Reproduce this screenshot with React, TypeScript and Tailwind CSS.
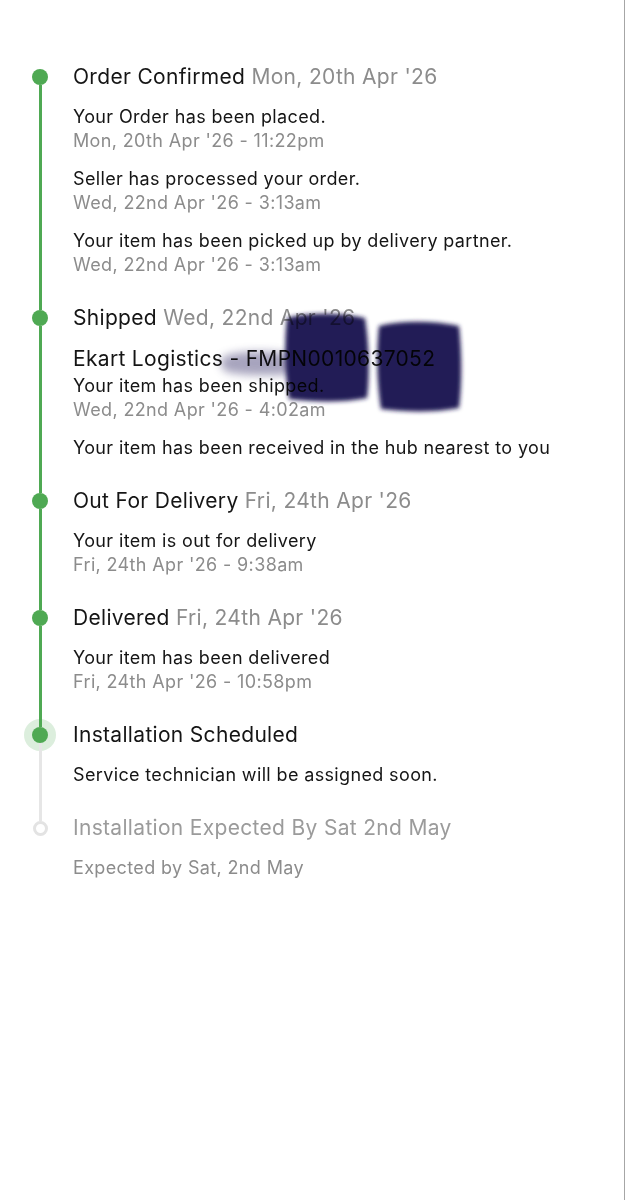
import React from 'react';

type Event = { text: string; time?: string; big?: boolean; muted?: boolean };
type Step = {
  title: string;
  date?: string;
  state: 'done' | 'current' | 'pending';
  events: Event[];
  redacted?: boolean;
};

const steps: Step[] = [
  {
    title: 'Order Confirmed',
    date: "Mon, 20th Apr '26",
    state: 'done',
    events: [
      { text: 'Your Order has been placed.', time: "Mon, 20th Apr '26 - 11:22pm" },
      { text: 'Seller has processed your order.', time: "Wed, 22nd Apr '26 - 3:13am" },
      { text: 'Your item has been picked up by delivery partner.', time: "Wed, 22nd Apr '26 - 3:13am" },
    ],
  },
  {
    title: 'Shipped',
    date: "Wed, 22nd Apr '26",
    state: 'done',
    redacted: true,
    events: [
      { text: 'Ekart Logistics - FMPN0010637052', big: true },
      { text: 'Your item has been shipped.', time: "Wed, 22nd Apr '26 - 4:02am" },
      { text: 'Your item has been received in the hub nearest to you' },
    ],
  },
  {
    title: 'Out For Delivery',
    date: "Fri, 24th Apr '26",
    state: 'done',
    events: [{ text: 'Your item is out for delivery', time: "Fri, 24th Apr '26 - 9:38am" }],
  },
  {
    title: 'Delivered',
    date: "Fri, 24th Apr '26",
    state: 'done',
    events: [{ text: 'Your item has been delivered', time: "Fri, 24th Apr '26 - 10:58pm" }],
  },
  {
    title: 'Installation Scheduled',
    state: 'current',
    events: [{ text: 'Service technician will be assigned soon.' }],
  },
  {
    title: 'Installation Expected By Sat 2nd May',
    state: 'pending',
    events: [{ text: 'Expected by Sat, 2nd May', muted: true }],
  },
];

function Redaction() {
  // scribble covering part of the tracking row
  return (
    <svg
      className="absolute left-0 top-0 pointer-events-none mix-blend-multiply"
      width="400"
      height="120"
      viewBox="0 0 400 120"
    >
      <defs>
        <filter id="soft" x="-20%" y="-20%" width="140%" height="140%">
          <feGaussianBlur stdDeviation="2.2" />
        </filter>
        <filter id="softer" x="-20%" y="-50%" width="140%" height="200%">
          <feGaussianBlur stdDeviation="4" />
        </filter>
      </defs>
      <path d="M152 52 C170 46 200 47 222 50 L222 70 C200 72 170 72 154 68 C146 64 146 56 152 52 Z" fill="#8a86a8" opacity="0.75" filter="url(#softer)" />
      <path d="M214 14 C238 8 268 9 292 14 C296 40 297 70 294 94 C270 99 240 98 216 95 C212 70 211 40 214 14 Z" fill="#231d57" filter="url(#soft)" />
      <path d="M306 22 C330 16 362 17 386 22 C389 50 389 80 386 104 C360 109 332 108 308 105 C304 80 303 50 306 22 Z" fill="#231d57" filter="url(#soft)" />
    </svg>
  );
}

function Marker({ step, index }: { step: Step; index: number }) {
  const prev = steps[index - 1];
  const next = steps[index + 1];
  const topColor = !prev ? 'bg-transparent' : step.state === 'pending' ? 'bg-[#e6e6e6]' : 'bg-[#4fa953]';
  const bottomColor = !next ? 'bg-transparent' : next.state === 'pending' ? 'bg-[#e6e6e6]' : 'bg-[#4fa953]';

  return (
    <div className="ml-[32px] w-[16px] flex flex-col items-center shrink-0">
      {step.state === 'pending' ? (
        <>
          <div className={`w-[3px] h-[7px] ${topColor}`} />
          <div className="w-[15px] h-[15px] rounded-full border-[3px] border-[#e3e3e3] bg-white" />
        </>
      ) : (
        <>
          <div className={`w-[3px] h-[6px] ${topColor}`} />
          <div
            className={`w-[16px] h-[16px] rounded-full bg-[#4fa953] ${
              step.state === 'current' ? 'shadow-[0_0_0_8px_rgba(79,169,83,0.2)]' : ''
            }`}
          />
        </>
      )}
      <div className={`w-[3px] flex-1 ${bottomColor}`} />
    </div>
  );
}

export default function App() {
  return (
    <div
      className="min-h-screen bg-white border-r border-[#a6a6a6] pt-[63px] text-[#151515]"
      style={{ fontFamily: 'Inter, "Noto Sans", sans-serif' }}
    >
      {steps.map((step, i) => (
        <div key={step.title} className="flex">
          <Marker step={step} index={i} />
          <div className={`relative ml-[25px] flex-1 ${i < steps.length - 1 ? 'pb-[27px]' : ''}`}>
            <div className="text-[21px] leading-[28px] tracking-[0.015em]">
              <span className={step.state === 'pending' ? 'text-[#9b9b9b]' : ''}>{step.title}</span>
              {step.date && <span className="text-[#8c8c8c]"> {step.date}</span>}
            </div>
            <div className="mt-[13px] flex flex-col">
              {step.events.map((ev, j) => (
                <div key={j} className={j > 0 && !step.events[j - 1].big ? 'mt-[13px]' : ''}>
                  {ev.big ? (
                    <div className="text-[21px] leading-[28px] tracking-[0.015em]">{ev.text}</div>
                  ) : (
                    <div
                      className={`text-[18px] leading-[25px] tracking-[0.02em] ${
                        ev.muted ? 'text-[#8c8c8c]' : ''
                      }`}
                    >
                      {ev.text}
                    </div>
                  )}
                  {ev.time && (
                    <div className="text-[18px] leading-[24px] tracking-[0.02em] text-[#8c8c8c]">{ev.time}</div>
                  )}
                </div>
              ))}
            </div>
            {step.redacted && <Redaction />}
          </div>
        </div>
      ))}
    </div>
  );
}
